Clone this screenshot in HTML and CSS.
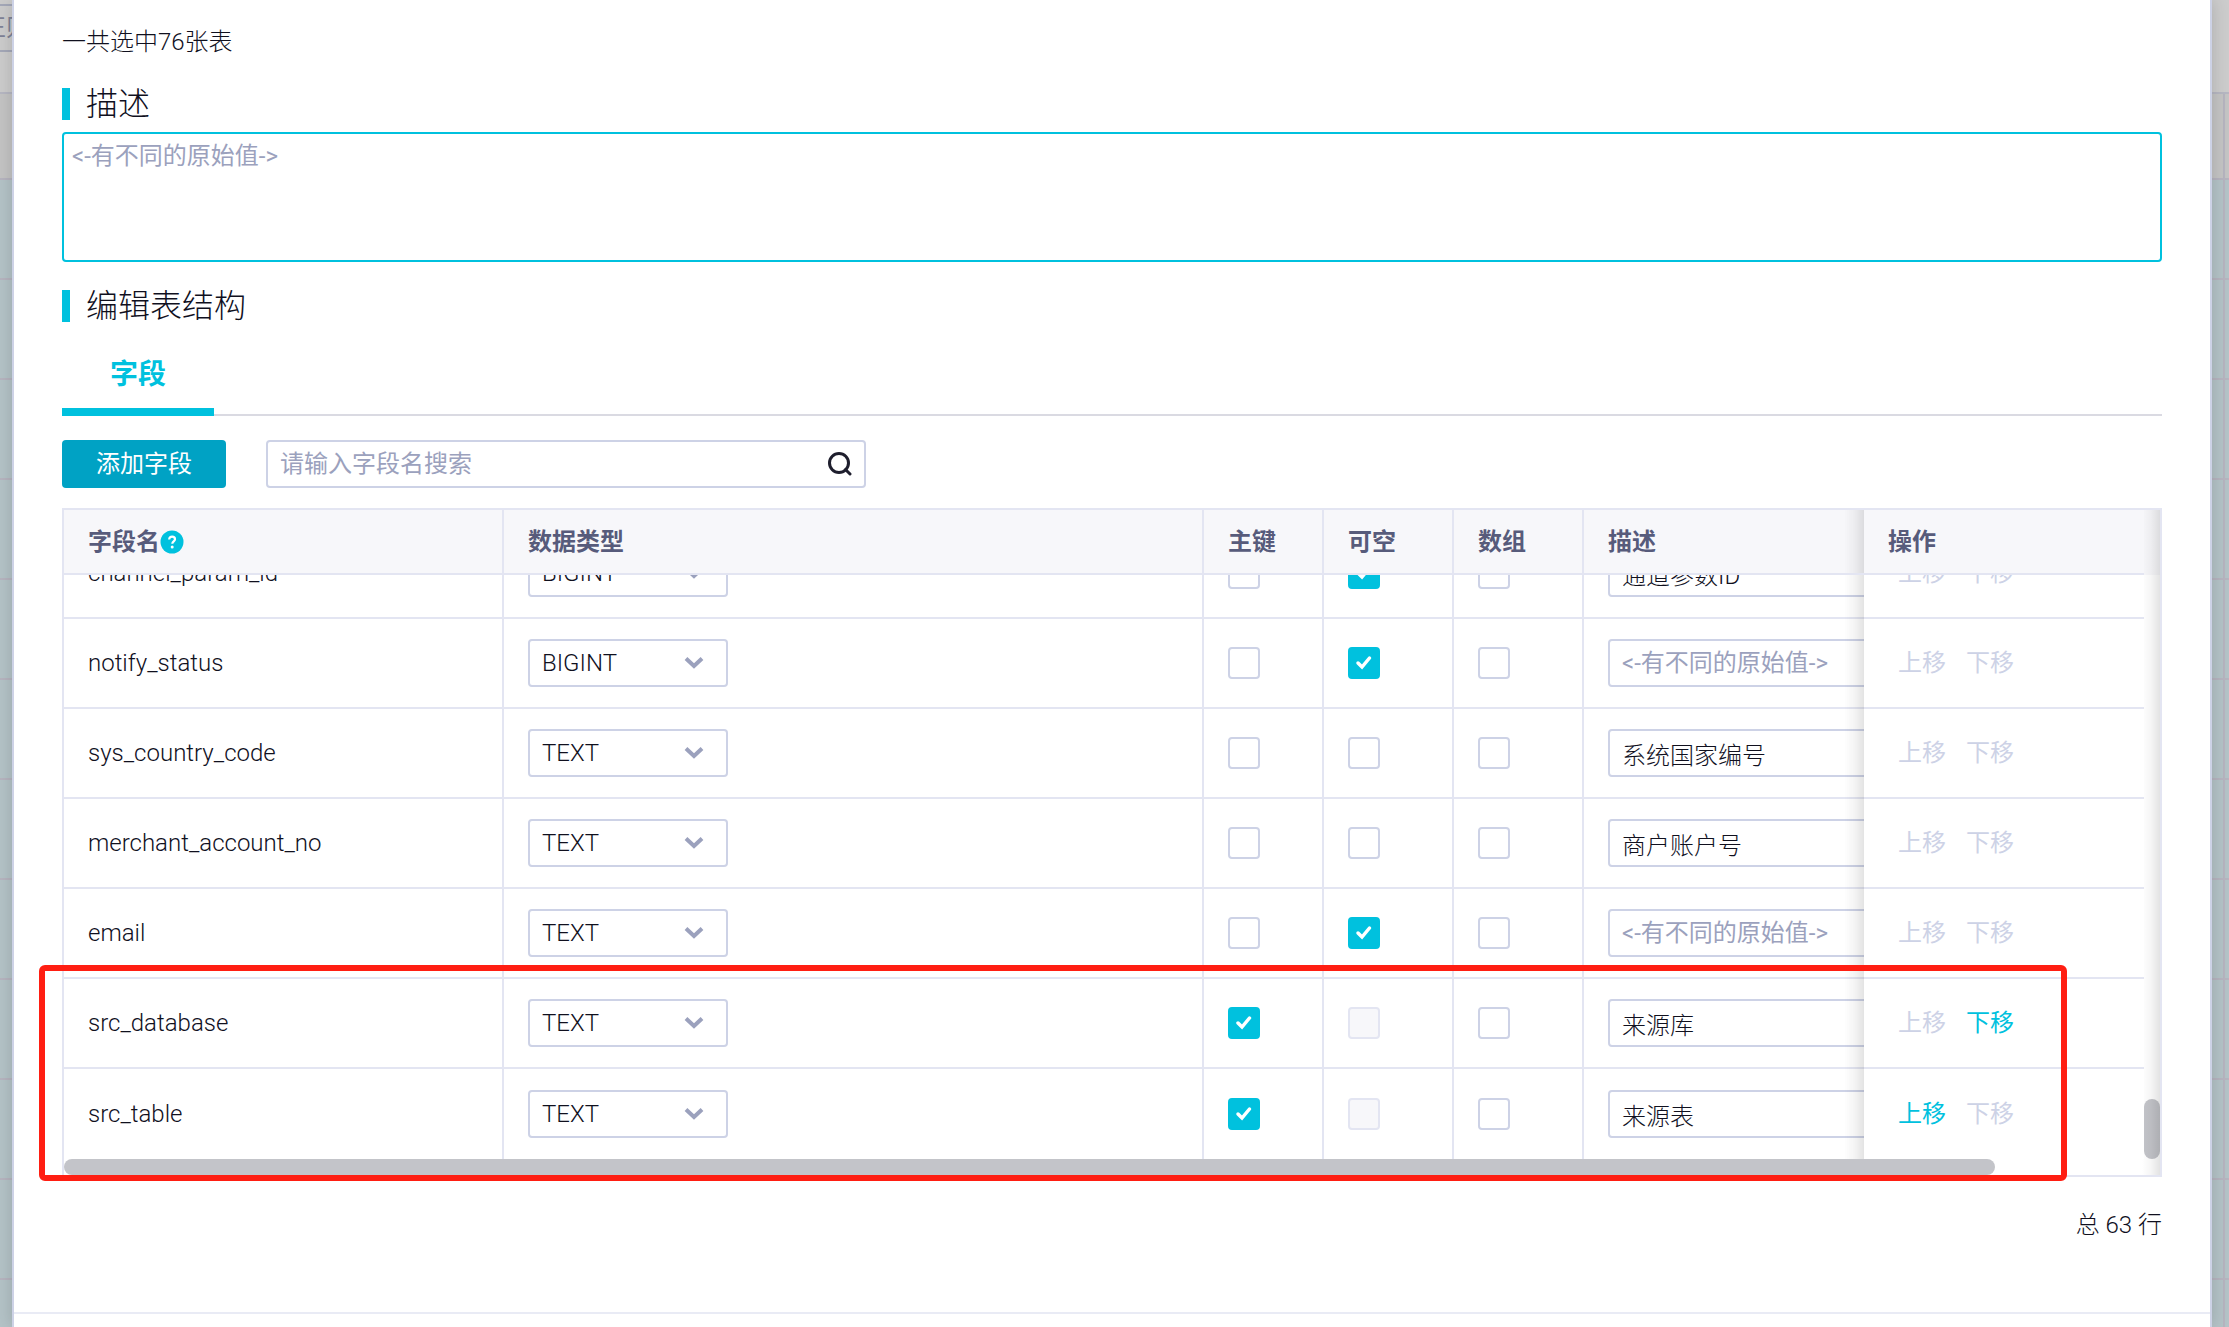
FILE: index.html
```html
<!DOCTYPE html>
<html lang="zh-CN">
<head>
<meta charset="utf-8">
<title>编辑表结构</title>
<link rel="stylesheet" href="styles.css">
</head>
<body>
<svg class="sprite" aria-hidden="true">
  <symbol id="chevron" viewBox="0 0 20 14"><path d="M2 2.500 10 10 18 2.500" fill="none" stroke="currentColor" stroke-width="4"/></symbol>
</svg>
<div class="backdrop">
  <div class="backdrop-bar"><span class="backdrop-field">正则</span></div>
  <div class="backdrop-row backdrop-head"></div>
  <div class="backdrop-row"></div><div class="backdrop-row"></div><div class="backdrop-row"></div>
  <div class="backdrop-row"></div><div class="backdrop-row"></div><div class="backdrop-row"></div>
  <div class="backdrop-row"></div><div class="backdrop-row"></div><div class="backdrop-row"></div>
  <div class="backdrop-row"></div><div class="backdrop-row"></div><div class="backdrop-row"></div>
</div>
<main class="dialog">
  <div class="dialog-body">
    <p class="summary">一共选中76张表</p>
    <h2 class="title"><label for="desc">描述</label></h2>
    <textarea class="desc" id="desc" placeholder="&lt;-有不同的原始值-&gt;"></textarea>
    <h2 class="title title-next">编辑表结构</h2>
    <div class="tabs" role="tablist"><button class="tab" role="tab" aria-selected="true">字段</button></div>
    <div class="toolbar">
      <button class="add">添加字段</button>
      <div class="search">
        <input type="text" aria-label="搜索字段名" placeholder="请输入字段名搜索">
        <svg class="search-icon" viewBox="0 0 26 26" aria-hidden="true"><circle cx="13" cy="12" r="9.500"/><path d="M19.500 18.500 24 23"/></svg>
      </div>
    </div>
    <div class="grid">
      <div class="scroller">
        <table class="fields">
          <colgroup><col class="c-name"><col class="c-type"><col class="c-key"><col class="c-flag"><col class="c-flag"><col class="c-desc"><col class="c-op"></colgroup>
          <thead><tr>
            <th><span class="head-name">字段名<svg class="help" viewBox="0 0 24 24" aria-hidden="true"><circle cx="12" cy="12" r="11.500" fill="#00c1de"/><path d="M9.200 9.500c0-1.800 1.200-2.900 2.900-2.900s2.900 1 2.900 2.600c0 2.100-2.700 2.300-2.700 4.600" fill="none" stroke="#fff" stroke-width="2.200"/><circle cx="12.200" cy="17" r="1.500" fill="#fff"/></svg></span></th>
            <th>数据类型</th><th>主键</th><th>可空</th><th>数组</th><th class="last">描述</th><th class="op">操作</th>
          </tr></thead>
          <tbody>
            <tr><td>channel_param_id</td>
              <td><span class="select"><select aria-label="数据类型"><option>BIGINT</option></select><svg><use href="#chevron"/></svg></span></td>
              <td><input type="checkbox" aria-label="主键"></td><td><input type="checkbox" aria-label="可空" checked></td><td><input type="checkbox" aria-label="数组"></td>
              <td class="last"><input class="text" type="text" aria-label="描述" value="通道参数ID"></td>
              <td class="op"><div class="moves"><button disabled>上移</button><button disabled>下移</button></div></td></tr>
            <tr><td>notify_status</td>
              <td><span class="select"><select aria-label="数据类型"><option>BIGINT</option></select><svg><use href="#chevron"/></svg></span></td>
              <td><input type="checkbox" aria-label="主键"></td><td><input type="checkbox" aria-label="可空" checked></td><td><input type="checkbox" aria-label="数组"></td>
              <td class="last"><input class="text" type="text" aria-label="描述" placeholder="&lt;-有不同的原始值-&gt;"></td>
              <td class="op"><div class="moves"><button disabled>上移</button><button disabled>下移</button></div></td></tr>
            <tr><td>sys_country_code</td>
              <td><span class="select"><select aria-label="数据类型"><option>TEXT</option></select><svg><use href="#chevron"/></svg></span></td>
              <td><input type="checkbox" aria-label="主键"></td><td><input type="checkbox" aria-label="可空"></td><td><input type="checkbox" aria-label="数组"></td>
              <td class="last"><input class="text" type="text" aria-label="描述" value="系统国家编号"></td>
              <td class="op"><div class="moves"><button disabled>上移</button><button disabled>下移</button></div></td></tr>
            <tr><td>merchant_account_no</td>
              <td><span class="select"><select aria-label="数据类型"><option>TEXT</option></select><svg><use href="#chevron"/></svg></span></td>
              <td><input type="checkbox" aria-label="主键"></td><td><input type="checkbox" aria-label="可空"></td><td><input type="checkbox" aria-label="数组"></td>
              <td class="last"><input class="text" type="text" aria-label="描述" value="商户账户号"></td>
              <td class="op"><div class="moves"><button disabled>上移</button><button disabled>下移</button></div></td></tr>
            <tr><td>email</td>
              <td><span class="select"><select aria-label="数据类型"><option>TEXT</option></select><svg><use href="#chevron"/></svg></span></td>
              <td><input type="checkbox" aria-label="主键"></td><td><input type="checkbox" aria-label="可空" checked></td><td><input type="checkbox" aria-label="数组"></td>
              <td class="last"><input class="text" type="text" aria-label="描述" placeholder="&lt;-有不同的原始值-&gt;"></td>
              <td class="op"><div class="moves"><button disabled>上移</button><button disabled>下移</button></div></td></tr>
            <tr><td>src_database</td>
              <td><span class="select"><select aria-label="数据类型"><option>TEXT</option></select><svg><use href="#chevron"/></svg></span></td>
              <td><input type="checkbox" aria-label="主键" checked></td><td><input type="checkbox" aria-label="可空" disabled></td><td><input type="checkbox" aria-label="数组"></td>
              <td class="last"><input class="text" type="text" aria-label="描述" value="来源库"></td>
              <td class="op"><div class="moves"><button disabled>上移</button><button>下移</button></div></td></tr>
            <tr><td>src_table</td>
              <td><span class="select"><select aria-label="数据类型"><option>TEXT</option></select><svg><use href="#chevron"/></svg></span></td>
              <td><input type="checkbox" aria-label="主键" checked></td><td><input type="checkbox" aria-label="可空" disabled></td><td><input type="checkbox" aria-label="数组"></td>
              <td class="last"><input class="text" type="text" aria-label="描述" value="来源表"></td>
              <td class="op"><div class="moves"><button>上移</button><button disabled>下移</button></div></td></tr>
          </tbody>
        </table>
      </div>
      <div class="track-y"><span class="thumb-y"></span></div>
      <div class="track-x"><span class="thumb-x"></span></div>
      <div class="edge-shadow"></div>
      <div class="marker"></div>
    </div>
    <p class="total">总 63 行</p>
  </div>
  <footer class="dialog-foot"></footer>
</main>
</body>
</html>
```
FILE: styles.css
```css
* { box-sizing: border-box; }
body {
  margin: 0;
  height: 100vh;
  overflow: hidden;
  position: relative;
  padding: 0 17px 0 12px;
  background: #ccc;
  color: #10101e;
  font: 300 24px/36px Roboto, "Noto Sans CJK SC", sans-serif;
}
button, input, select, textarea { font: inherit; color: inherit; margin: 0; }
button { border: 0; padding: 0; background: none; cursor: pointer; }
.sprite { position: absolute; width: 0; height: 0; }

/* dimmed page under the dialog */
.backdrop { position: absolute; inset: 0; overflow: hidden; }
.backdrop-bar { height: 94px; padding-top: 4px; border-bottom: 2px solid #b6b7c2; }
.backdrop-field {
  display: block;
  width: 240px;
  height: 48px;
  margin-left: -32px;
  padding: 4px 12px;
  border: 2px solid #a4a8b8;
  color: #7e8296;
  font-weight: 400;
}
.backdrop-row {
  height: 100px;
  background: linear-gradient(#b6b4bf, #b6b4bf) right 4px top / 2px 100% no-repeat #b4c3c7;
  border-bottom: 2px solid #b6b4bf;
}
.backdrop-head { height: 86px; background-color: #c4c4c4; }

.dialog {
  position: relative;
  height: 100%;
  display: flex;
  flex-direction: column;
  border: solid #cdd2e6;
  border-width: 0 2px;
  background: #fff;
  box-shadow: 0 0 16px rgba(0, 0, 0, .16);
}
.dialog-body { flex: 1; min-height: 0; padding: 24px 48px 0; }
.dialog-foot { height: 15px; border-top: 2px solid #e9ebf5; }

.summary { margin: 0 0 28px; }
.title {
  display: flex;
  align-items: center;
  gap: 16px;
  height: 32px;
  margin: 0 0 12px;
  font-size: 32px;
  font-weight: 300;
}
.title::before { content: ""; width: 8px; height: 32px; background: #00c1de; }
.title-next { margin: 28px 0 16px; }
.desc {
  display: block;
  width: 100%;
  height: 130px;
  padding: 4px 8px;
  border: 2px solid #00c1de;
  border-radius: 4px;
  outline: 0;
  resize: none;
}
::placeholder { color: #9ba1bd; font-weight: 400; opacity: 1; }

.tabs { display: flex; height: 78px; border-bottom: 2px solid #dadae2; margin-bottom: 24px; }
.tab {
  height: 78px;
  padding: 4px 48px 0;
  border-bottom: 8px solid #00c1de;
  color: #00c1de;
  font-size: 28px;
  font-weight: 700;
}
.toolbar { display: flex; gap: 40px; margin-bottom: 20px; }
.add { width: 164px; height: 48px; border-radius: 4px; background: #00a2c4; color: #fff; font-weight: 400; }
.search {
  display: flex;
  align-items: center;
  width: 600px;
  height: 48px;
  padding: 0 12px;
  border: 2px solid #cdd2e6;
  border-radius: 4px;
}
.search input { flex: 1; min-width: 0; padding: 0; border: 0; outline: 0; background: none; }
.search-icon { width: 26px; height: 26px; fill: none; stroke: #1e1e2d; stroke-width: 3; stroke-linecap: round; }

/* field table: header and action column stay in view, list opens at its end */
.grid {
  position: relative;
  display: grid;
  grid-template-columns: minmax(0, 1fr) 16px;
  grid-template-rows: auto 16px;
  border: 2px solid #e3e5f2;
}
.scroller {
  display: flex;
  flex-direction: column-reverse;
  height: 649px;
  overflow: auto;
  scrollbar-width: none;
}
.fields { flex: none; width: 100%; min-width: 2240px; table-layout: fixed; border-collapse: separate; border-spacing: 0; }
.c-name { width: 440px; }
.c-type { width: 700px; }
.c-key { width: 120px; }
.c-flag { width: 130px; }
.c-op { width: 280px; }
.fields th, .fields td {
  padding: 0 24px;
  border: solid #e3e5f2;
  border-width: 0 2px 2px 0;
  text-align: left;
  vertical-align: middle;
}
.fields th {
  position: sticky;
  top: 0;
  z-index: 2;
  height: 65px;
  background: #f7f7fa;
  color: #575b7b;
  font-weight: 700;
}
.fields td { height: 90px; }
.fields tr:last-child td { border-bottom-width: 0; }
.fields .last, .fields .op { border-right-width: 0; }
.fields .op { position: sticky; right: 0; z-index: 1; background: #fff; }
.fields th.op { z-index: 3; background: #f7f7fa; }
.fields .op::before {
  content: "";
  position: absolute;
  inset: 0 100% -2px auto;
  width: 20px;
  background: linear-gradient(to right, rgba(0, 0, 0, 0), rgba(0, 0, 0, .04) 50%, rgba(0, 0, 0, .11));
}
.fields tr:last-child .op::before, .fields th.op::before { bottom: 0; }
.head-name { display: flex; align-items: center; }
.help { width: 24px; height: 24px; }

.select { display: grid; width: 200px; height: 48px; align-items: center; }
.select > * { grid-area: 1 / 1; }
.select select {
  width: 200px;
  height: 48px;
  padding: 0 44px 0 12px;
  border: 2px solid #cdd2e6;
  border-radius: 4px;
  background: #fff;
  appearance: none;
}
.select svg { width: 20px; height: 14px; justify-self: end; margin-right: 24px; color: #9ba1bd; pointer-events: none; }
input[type="checkbox"] {
  display: block;
  width: 32px;
  height: 32px;
  border: 2px solid #cdd2e6;
  border-radius: 4px;
  background: #fff;
  appearance: none;
}
input[type="checkbox"]:checked {
  border-color: #00c1de;
  background: #00c1de url("data:image/svg+xml,%3Csvg xmlns='http://www.w3.org/2000/svg' viewBox='0 0 28 28'%3E%3Cpath d='M8 14 12 18 19.500 9' fill='none' stroke='white' stroke-width='3.500' stroke-linecap='round'/%3E%3C/svg%3E") center / 28px 28px no-repeat;
}
input[type="checkbox"]:disabled { border-color: #e3e5f2; background: #f7f7fa; }
.text {
  display: block;
  width: 100%;
  height: 48px;
  padding: 0 12px;
  border: 2px solid #cdd2e6;
  border-radius: 4px;
  outline: 0;
}
.moves { display: flex; gap: 20px; padding-left: 10px; }
.moves button { color: #00c1de; font-weight: 400; }
.moves button:disabled { color: #cdd2e6; cursor: default; }

.track-y {
  display: flex;
  flex-direction: column;
  justify-content: flex-end;
  background: linear-gradient(#f7f7fa, #f7f7fa) top / 100% 65px no-repeat;
}
.thumb-y { height: 60px; border-radius: 8px; background: #c3c4c9; }
.track-x { grid-column: 1 / 3; padding-right: 165px; }
.thumb-x { display: block; height: 16px; border-radius: 8px; background: #c3c4c9; }
.edge-shadow {
  position: absolute;
  inset: 0 0 0 auto;
  width: 18px;
  background: linear-gradient(to right, rgba(0, 0, 0, 0), rgba(0, 0, 0, .04) 50%, rgba(0, 0, 0, .11));
  pointer-events: none;
}
/* call-out round the two source columns */
.marker {
  position: absolute;
  z-index: 4;
  left: -25px;
  right: 93px;
  bottom: -6px;
  height: 216px;
  border: 6px solid #ff1e12;
  border-radius: 6px;
  pointer-events: none;
}
.total { margin: 30px 0 0; text-align: right; }
```
